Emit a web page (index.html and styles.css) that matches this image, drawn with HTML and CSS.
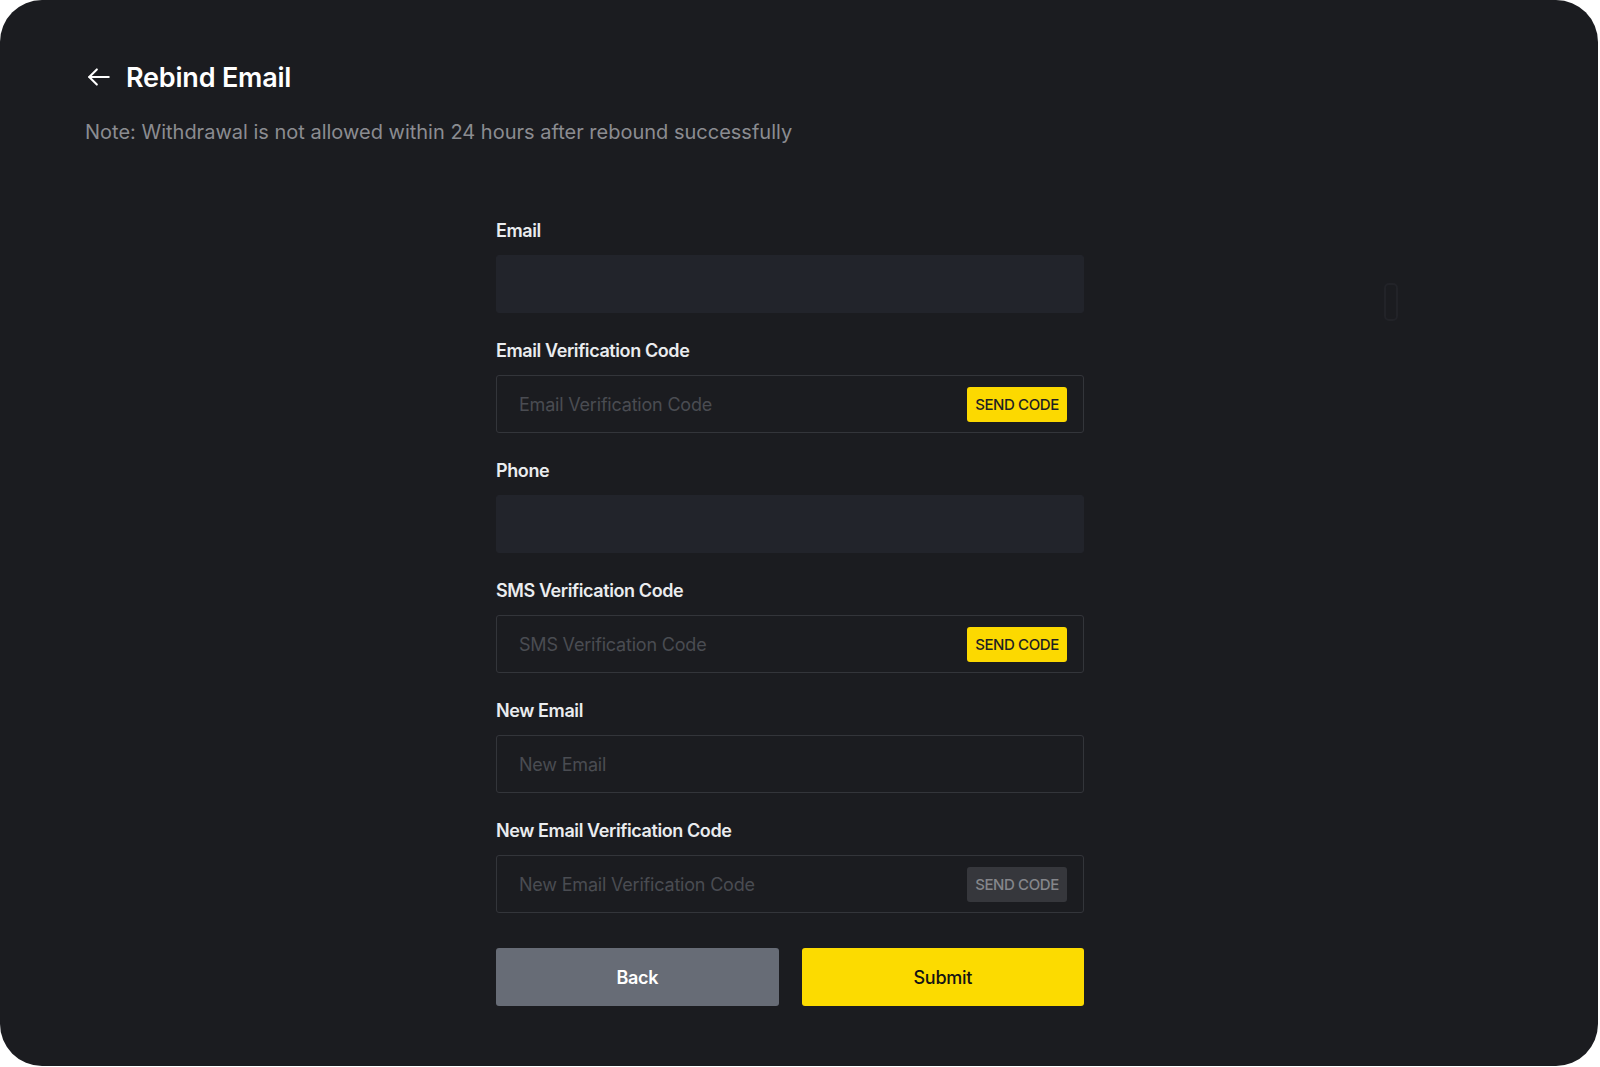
FILE: index.html
```html
<!DOCTYPE html>
<html lang="en">
<head>
  <meta charset="UTF-8">
  <meta name="viewport" content="width=device-width, initial-scale=1.0">
  <title>Rebind Email</title>
  <link rel="stylesheet" href="styles.css">
</head>
<body>

  <div class="card">
    <div class="header">
      <a class="back-link" href="#">
        <svg width="26" height="26" viewBox="0 0 24 24" fill="none" stroke="#fff" stroke-width="1.9" stroke-linecap="round" stroke-linejoin="round">
          <path d="M21 12H3"/>
          <path d="M10 5l-7 7 7 7"/>
        </svg>
      </a>
      <h1>Rebind Email</h1>
    </div>
    <p class="note">Note: Withdrawal is not allowed within 24 hours after rebound successfully</p>

    <form class="form">
      <div class="field">
        <label>Email</label>
        <div class="input filled"></div>
      </div>

      <div class="field">
        <label>Email Verification Code</label>
        <div class="input">
          <input type="text" placeholder="Email Verification Code">
          <button type="button" class="send-code">SEND CODE</button>
        </div>
      </div>

      <div class="field">
        <label>Phone</label>
        <div class="input filled"></div>
      </div>

      <div class="field">
        <label>SMS Verification Code</label>
        <div class="input">
          <input type="text" placeholder="SMS Verification Code">
          <button type="button" class="send-code">SEND CODE</button>
        </div>
      </div>

      <div class="field">
        <label>New Email</label>
        <div class="input">
          <input type="text" placeholder="New Email">
        </div>
      </div>

      <div class="field">
        <label>New Email Verification Code</label>
        <div class="input">
          <input type="text" placeholder="New Email Verification Code">
          <button type="button" class="send-code disabled">SEND CODE</button>
        </div>
      </div>

      <div class="actions">
        <button type="button" class="btn btn-back">Back</button>
        <button type="button" class="btn btn-submit">Submit</button>
      </div>
    </form>

    <div class="scroll-handle"></div>
  </div>

</body>
</html>
```

FILE: styles.css
```css
body {
  margin: 0;
  background: #ffffff;
  font-family: 'Inter', 'Noto Sans', sans-serif;
}

.card {
  position: relative;
  box-sizing: border-box;
  width: 1598px;
  height: 1066px;
  background: #1b1c20;
  border-radius: 42px;
  padding: 63px 0 0 85px;
}

.header {
  display: flex;
  align-items: center;
  gap: 14px;
  height: 28px;
  padding-left: 1px;
}

.back-link {
  display: flex;
}

h1 {
  margin: 0;
  font-size: 27px;
  font-weight: 600;
  letter-spacing: -0.2px;
  color: #ffffff;
}

.note {
  margin: 29px 0 0;
  font-size: 20px;
  letter-spacing: 0;
  color: #8b8c91;
}

.form {
  width: 588px;
  margin: 75px 0 0 411px;
}

.field {
  margin-bottom: 26px;
}

.field label {
  display: block;
  height: 24px;
  line-height: 24px;
  margin-bottom: 12px;
  font-size: 18px;
  font-weight: 600;
  letter-spacing: -0.4px;
  color: #eaecef;
}

.input {
  box-sizing: border-box;
  display: flex;
  align-items: center;
  height: 58px;
  border: 1px solid #33353a;
  border-radius: 3px;
  padding: 0 16px 0 22px;
}

.input.filled {
  background: #22242b;
  border-color: #22242b;
}

.input input {
  flex: 1;
  min-width: 0;
  padding: 0;
  background: transparent;
  border: none;
  outline: none;
  font-family: inherit;
  font-size: 18px;
  letter-spacing: -0.2px;
  color: #eaecef;
}

.input input::placeholder {
  color: #4a4c52;
}

.send-code {
  width: 100px;
  height: 35px;
  padding: 0;
  border: none;
  border-radius: 3px;
  background: #fcd900;
  color: #1e1f23;
  font-family: inherit;
  font-size: 15px;
  font-weight: 500;
  letter-spacing: -0.4px;
  cursor: pointer;
}

.send-code.disabled {
  background: #36373c;
  color: #85868b;
}

.actions {
  display: flex;
  gap: 23px;
  margin-top: 35px;
}

.btn {
  flex: 1;
  height: 58px;
  border: none;
  border-radius: 3px;
  font-family: inherit;
  font-size: 18px;
  font-weight: 600;
  letter-spacing: -0.3px;
  cursor: pointer;
}

.btn-back {
  background: #676c76;
  color: #ffffff;
}

.btn-submit {
  background: #fcdb00;
  color: #141414;
  font-weight: 500;
}

.scroll-handle {
  position: absolute;
  left: 1384px;
  top: 283px;
  width: 14px;
  height: 38px;
  border: 2px solid #222328;
  border-radius: 5px;
  box-sizing: border-box;
}
```
